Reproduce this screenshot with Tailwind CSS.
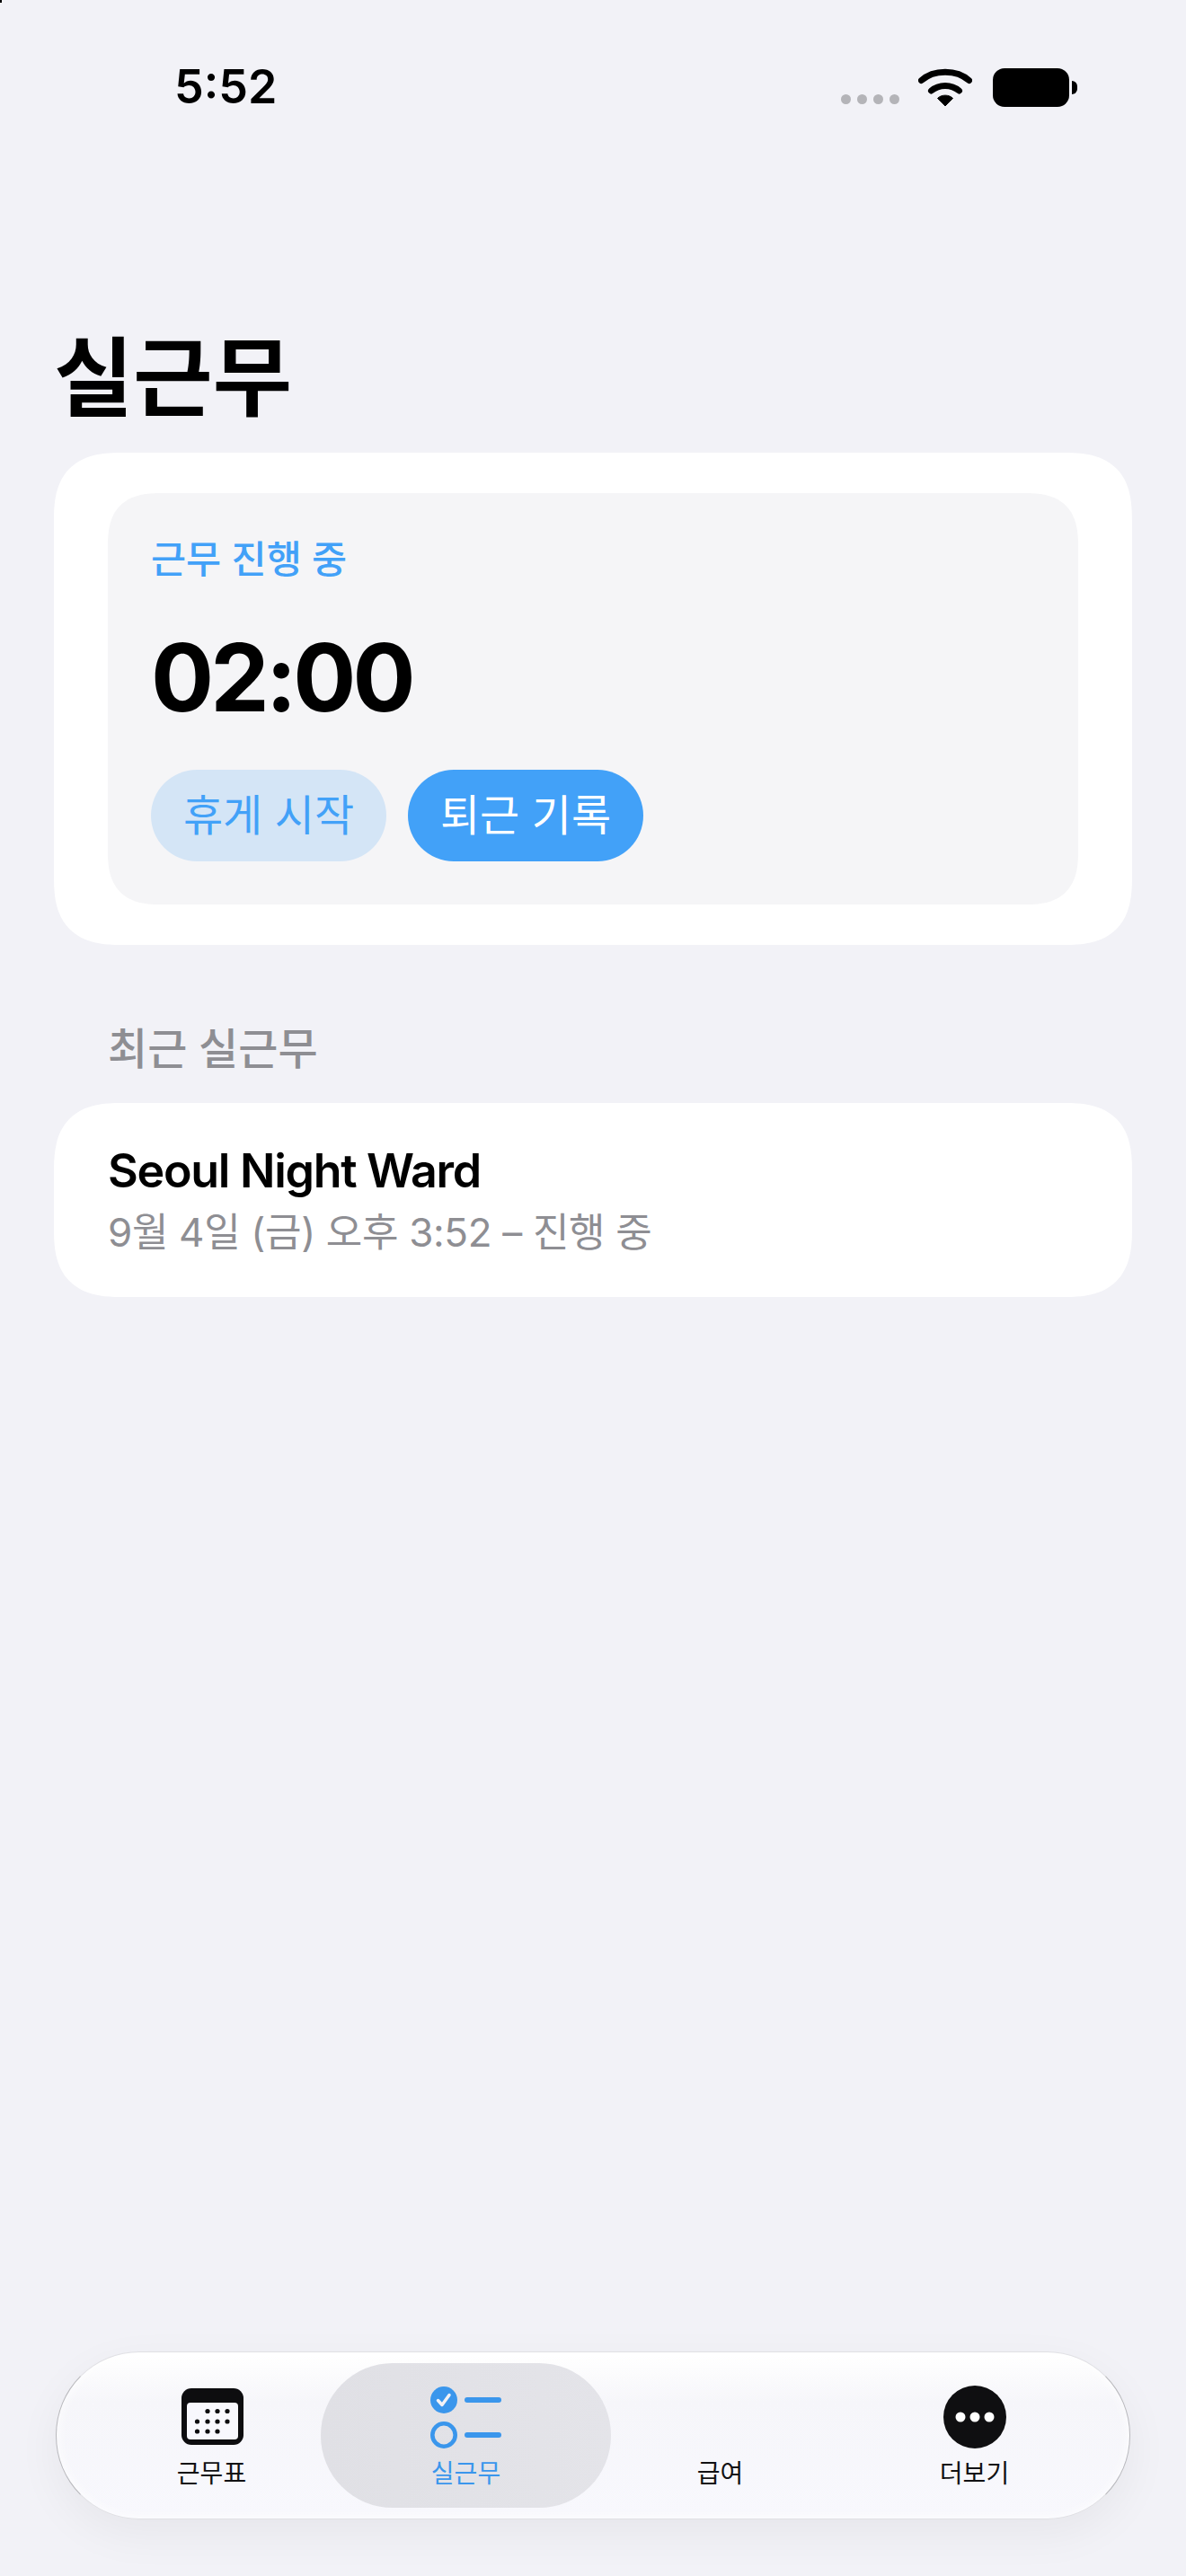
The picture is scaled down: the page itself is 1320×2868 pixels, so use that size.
<!DOCTYPE html>
<html lang="ko">
<head>
    <meta charset="UTF-8">
    <meta name="viewport" content="width=device-width, initial-scale=1.0">
    <title>실근무</title>
    <script src="https://cdn.jsdelivr.net/npm/@tailwindcss/browser@4"></script>
</head>
<body class="bg-[#f2f2f7] font-['Inter','Noto_Sans_CJK_KR',sans-serif] text-black">
    <div class="relative flex h-[2868px] w-[1320px] flex-col overflow-hidden">
        <div class="absolute left-0 top-0 h-[3px] w-[2px] bg-black"></div>

        <!-- Status bar -->
        <div class="flex h-[146px] items-start justify-between pl-[194px] pr-[121px] pt-[64px]">
            <span class="text-[52px] font-semibold leading-[66px]">5:52</span>
            <div class="flex items-start pt-[10px]">
                <div class="mr-[21px] mt-[31px] flex gap-[7px]">
                    <span class="size-[11px] rounded-full bg-[#b4b4b8]"></span>
                    <span class="size-[11px] rounded-full bg-[#b4b4b8]"></span>
                    <span class="size-[11px] rounded-full bg-[#b4b4b8]"></span>
                    <span class="size-[11px] rounded-full bg-[#b4b4b8]"></span>
                </div>
                <svg class="mr-[23px] h-[44px] w-[60px]" viewBox="0 0 60 44" fill="none">
                    <path d="M3.5 15.5C17 3 43 3 56.5 15.5" stroke="#000" stroke-width="7" stroke-linecap="round"/>
                    <path d="M14.5 27C23 19.5 37 19.5 45.5 27" stroke="#000" stroke-width="7" stroke-linecap="round"/>
                    <path d="M30 44L21.5 35.5C25.5 31 34.5 31 38.5 35.5Z" fill="#000" stroke="#000" stroke-width="1" stroke-linejoin="round"/>
                </svg>
                <div class="mt-[2px] flex items-center">
                    <div class="h-[43px] w-[85px] rounded-[13px] bg-black"></div>
                    <div class="ml-[3px] h-[15px] w-[6px] rounded-r-full bg-black"></div>
                </div>
            </div>
        </div>

        <h1 class="ml-[60px] mt-[219px] text-[96px] font-bold leading-[110px]">실근무</h1>

        <!-- Active shift -->
        <section class="mx-[60px] mt-[29px] rounded-[76px] bg-white px-[60px] py-[45px] [corner-shape:superellipse(1.4)]">
            <div class="h-[458px] rounded-[60px] bg-[#f5f5f7] pl-[48px] pt-[45px] [corner-shape:superellipse(1.4)]">
                <p class="text-[42.5px] font-medium leading-[58px] text-[#42a1f8]">근무 진행 중</p>
                <p class="mt-[42px] text-[104px] font-bold leading-[120px] tracking-[-4px]">02:00</p>
                <div class="mt-[43px] flex gap-[24px]">
                    <button class="h-[102px] w-[262px] rounded-full bg-[#d4e5f6] text-[48px] leading-none text-[#42a1f8]">휴게 시작</button>
                    <button class="h-[102px] w-[262px] rounded-full bg-[#42a1f8] text-[48px] leading-none text-white">퇴근 기록</button>
                </div>
            </div>
        </section>

        <!-- Recent shifts -->
        <h2 class="ml-[120px] mt-[85px] text-[48px] font-medium leading-[62px] text-[#8e8e93]">최근 실근무</h2>
        <section class="mx-[60px] mt-[29px] h-[216px] rounded-[76px] bg-white pl-[60px] pt-[44px] [corner-shape:superellipse(1.4)]">
            <p class="text-[52px] font-semibold leading-[64px] tracking-[-1.3px]">Seoul Night Ward</p>
            <p class="mt-[4px] text-[44px] leading-[64px] tracking-[-0.35px] text-[#8e8e93]">9월 4일 (금) 오후 3:52 – 진행 중</p>
        </section>

        <!-- Tab bar -->
        <nav class="mx-[62px] mb-[63px] mt-auto grid h-[187px] grid-cols-4 rounded-[93px] border border-x-[#b8b8bc] border-y-[#e0e0e4] bg-gradient-to-b from-white from-[2%] via-[#f6f6fa] via-[30%] to-[#f8f8fd] px-[31px] py-[12px] shadow-[0_16px_50px_rgba(0,0,0,0.05),inset_0_0_14px_rgba(255,255,255,0.9)]">
            <a class="flex flex-col items-center pt-[25px] text-[#111113]">
                <svg class="h-[70px] w-[70px]" viewBox="0 0 70 70">
                    <rect x="1" y="3" width="69" height="63" rx="11" fill="#0d0d0f"/>
                    <rect x="7" y="19" width="57" height="41" rx="4" fill="#f8f8fd"/>
                    <g fill="#0d0d0f">
                        <circle cx="30" cy="28.5" r="2.6"/><circle cx="41" cy="28.5" r="2.6"/><circle cx="52" cy="28.5" r="2.6"/>
                        <circle cx="18.5" cy="40" r="2.6"/><circle cx="30" cy="40" r="2.6"/><circle cx="41" cy="40" r="2.6"/><circle cx="52" cy="40" r="2.6"/>
                        <circle cx="18.5" cy="51" r="2.6"/><circle cx="30" cy="51" r="2.6"/><circle cx="41" cy="51" r="2.6"/>
                    </g>
                </svg>
                <span class="mt-[8px] text-[28px] leading-[40px]">근무표</span>
            </a>
            <a class="mx-[-20px] flex flex-col items-center rounded-[80px] bg-gradient-to-r from-[#e0e0e5] to-[#e4e4e9] pt-[25px] text-[#3a96ec]">
                <svg class="h-[70px] w-[80px]" viewBox="0 0 80 70">
                    <circle cx="15" cy="16" r="15" fill="#3a96ec"/>
                    <path d="M8.5 16.5L13 21.5L21 10.5" fill="none" stroke="#f2f2f6" stroke-width="3.5" stroke-linecap="round" stroke-linejoin="round"/>
                    <rect x="38" y="13" width="41" height="6" rx="3" fill="#3a96ec"/>
                    <circle cx="15" cy="55" r="12.7" fill="none" stroke="#3a96ec" stroke-width="4.6"/>
                    <rect x="38" y="52" width="41" height="6" rx="3" fill="#3a96ec"/>
                </svg>
                <span class="mt-[8px] text-[28px] leading-[40px]">실근무</span>
            </a>
            <a class="flex flex-col items-center pt-[25px] text-[#111113]">
                <div class="h-[70px] w-[70px]"></div>
                <span class="mt-[8px] text-[28px] leading-[40px]">급여</span>
            </a>
            <a class="flex flex-col items-center pt-[25px] text-[#111113]">
                <svg class="h-[70px] w-[70px]" viewBox="0 0 70 70">
                    <circle cx="35" cy="35" r="35" fill="#0f0f11"/>
                    <circle cx="19" cy="35" r="5.5" fill="#fff"/><circle cx="35" cy="35" r="5.5" fill="#fff"/><circle cx="51" cy="35" r="5.5" fill="#fff"/>
                </svg>
                <span class="mt-[8px] text-[28px] leading-[40px]">더보기</span>
            </a>
        </nav>
    </div>
</body>
</html>
